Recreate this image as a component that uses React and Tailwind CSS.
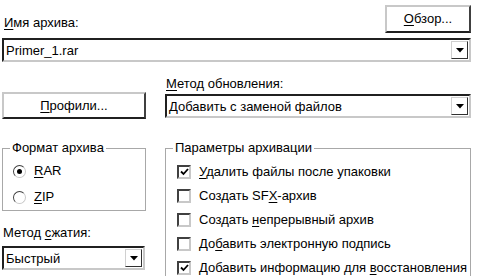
import React from "react";

const U = ({ children }) => <span className="underline underline-offset-2">{children}</span>;

const Arrow = () => (
  <div className="flex h-[18px] w-[17px] items-center justify-center border border-t-[#d0d0d0] border-l-[#d0d0d0] border-b-[#303030] border-r-[#303030] bg-white">
    <svg width="8" height="5" viewBox="0 0 8 5">
      <polygon points="0,0 8,0 4,4.5" fill="#000" />
    </svg>
  </div>
);

const Combo = ({ value, className }) => (
  <div
    className={`flex h-[24px] items-center justify-between border-2 border-t-[#202020] border-l-[#202020] border-b-[#c8c8c8] border-r-[#c8c8c8] bg-white pl-[2px] pr-[1px] ${className}`}
  >
    <span className="leading-none">{value}</span>
    <Arrow />
  </div>
);

const Button = ({ children, className }) => (
  <div
    className={`flex items-center justify-center border-2 border-t-[#c8c8c8] border-l-[#c8c8c8] border-b-[#202020] border-r-[#404040] bg-white ${className}`}
  >
    {children}
  </div>
);

const Radio = ({ checked, children }) => (
  <div className="flex h-[26px] items-center">
    <div className="ml-[10px] flex h-[13px] w-[13px] items-center justify-center rounded-full border border-t-[#404040] border-l-[#404040] border-b-[#c8c8c8] border-r-[#c8c8c8] bg-white">
      {checked && <div className="h-[5px] w-[5px] rounded-full bg-black" />}
    </div>
    <span className="ml-[8px]">{children}</span>
  </div>
);

const Check = ({ checked, children }) => (
  <div className="flex h-[24px] items-center">
    <div className="ml-[11px] flex h-[14px] w-[14px] items-center justify-center border-2 border-t-[#404040] border-l-[#404040] border-b-[#c8c8c8] border-r-[#c8c8c8] bg-white">
      {checked && (
        <svg width="9" height="8" viewBox="0 0 9 8">
          <polyline points="1,3.5 3.5,6 8,1" fill="none" stroke="#000" strokeWidth="1.8" />
        </svg>
      )}
    </div>
    <span className="ml-[8px]">{children}</span>
  </div>
);

export default function App() {
  return (
    <div className="h-[276px] w-[477px] overflow-hidden bg-white text-[13px] leading-[16px] text-black font-['Liberation_Sans',Arial,sans-serif]">
      <div className="flex justify-between pl-[4px] pr-[6px] pt-[5px]">
        <div className="pt-[10px]">
          <U>И</U>мя архива:
        </div>
        <Button className="h-[28px] w-[86px]">
          <span>
            <U>О</U>бзор...
          </span>
        </Button>
      </div>

      <div className="px-[2px] pr-[6px] pt-[5px]">
        <Combo value="Primer_1.rar" />
      </div>

      <div className="mt-[14px] grid grid-cols-[144px_1fr] gap-[19px] pl-[2px] pr-[6px]">
        <div className="pt-[16px]">
          <Button className="h-[27px] w-[144px]">
            <span>
              <U>П</U>рофили...
            </span>
          </Button>
        </div>
        <div>
          <div className="pl-[1px]">
            <U>М</U>етод обновления:
          </div>
          <Combo value="Добавить с заменой файлов" className="mt-[2px]" />
        </div>
      </div>

      <div className="mt-[22px] grid grid-cols-[144px_1fr] gap-[19px] pl-[2px] pr-[6px]">
        <div>
          <fieldset className="h-[70px] border border-[#a8a8a8]">
            <legend className="ml-[7px] px-[2px] leading-[14px]">Формат архива</legend>
            <div className="mt-[3px]">
              <Radio checked>
                <U>R</U>AR
              </Radio>
              <Radio>
                <U>Z</U>IP
              </Radio>
            </div>
          </fieldset>
          <div className="mt-[14px] pl-[1px]">
            Метод <U>с</U>жатия:
          </div>
          <Combo value="Быстрый" className="mt-[5px] w-[143px]" />
        </div>
        <div>
          <fieldset className="h-[160px] border border-[#a8a8a8]">
            <legend className="ml-[7px] px-[2px] leading-[14px]">Параметры архивации</legend>
            <div className="mt-[5px]">
              <Check checked>
                <U>У</U>далить файлы после упаковки
              </Check>
              <Check>
                Создать SF<U>X</U>-архив
              </Check>
              <Check>
                Создать <U>н</U>епрерывный архив
              </Check>
              <Check>
                До<U>б</U>авить электронную подпись
              </Check>
              <Check checked>
                Добавить информацию для <U>в</U>осстановления
              </Check>
            </div>
          </fieldset>
        </div>
      </div>
    </div>
  );
}
